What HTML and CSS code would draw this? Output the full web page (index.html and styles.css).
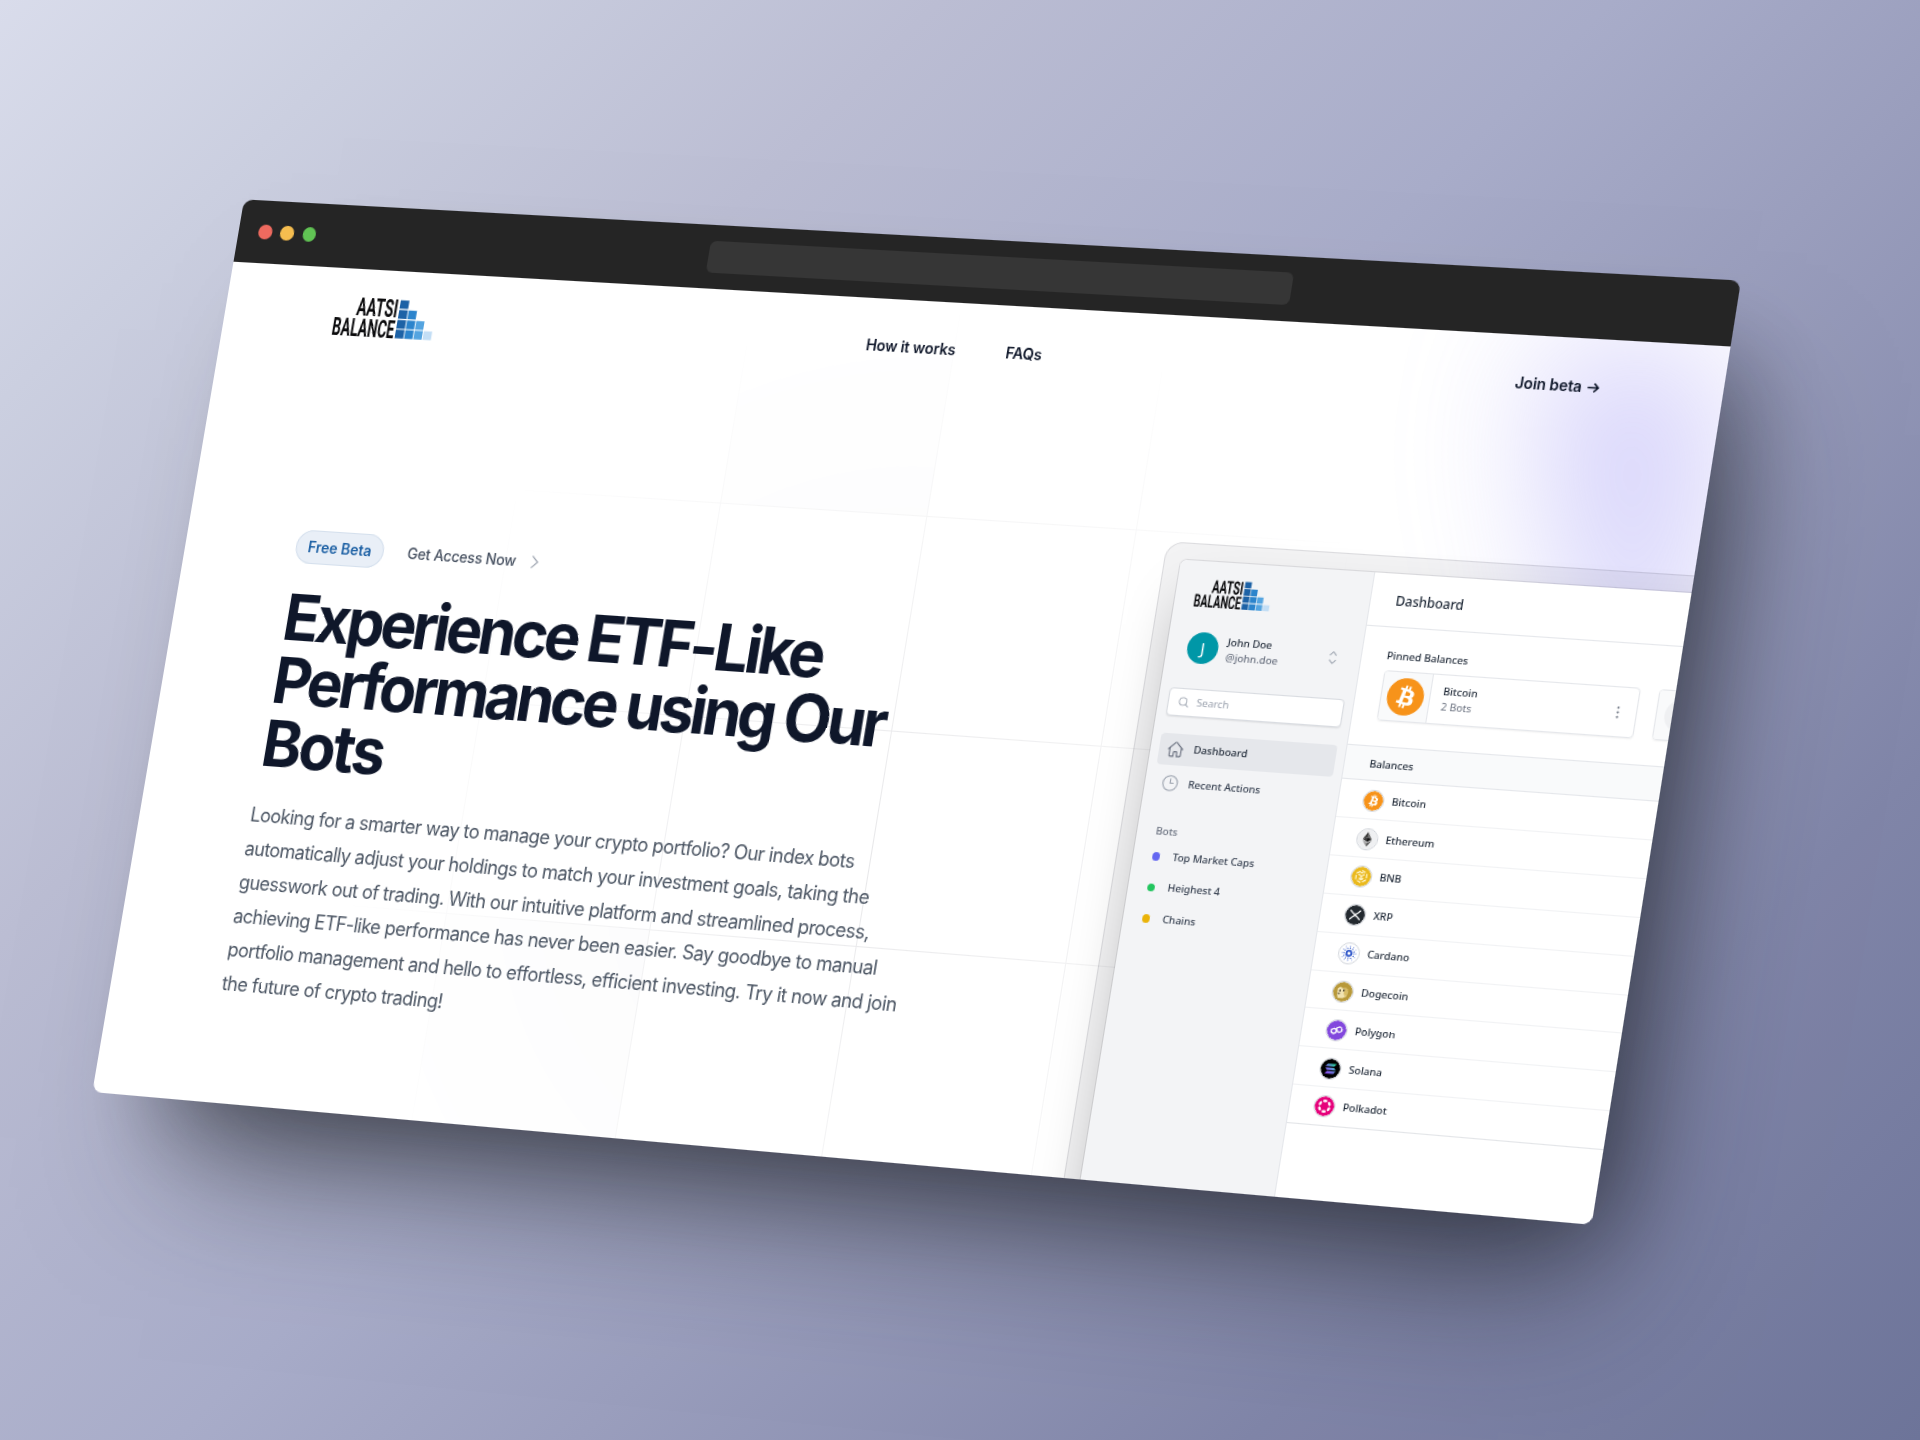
FILE: index.html
```html
<!DOCTYPE html>
<html lang="en">
<head>
<meta charset="utf-8">
<title>Aatsi Balance</title>
<link rel="stylesheet" href="styles.css">
</head>
<body>
<svg class="defs" aria-hidden="true">
  <symbol id="stairs" viewBox="0 0 102 40">
    <path fill="#1d62a6" d="M64 3.4h8.6v8.2H64zM64 12.8h8.6V21H64zM64 22.2h8.6v8.2H64zM64 31.6h8.6v8.2H64z"/>
    <path fill="#2c84cc" d="M73.5 12.8h8.3V21h-8.3zM73.5 22.2h8.3v8.2h-8.3zM73.5 31.6h8.3v8.2h-8.3z"/>
    <path fill="#54a4e0" d="M82.7 22.2H91v8.2h-8.3zM82.7 31.6H91v8.2h-8.3z"/>
    <path fill="#c3def5" d="M91.9 31.6h8.4v8.2h-8.4z"/>
  </symbol>
  <symbol id="btc" viewBox="0 0 32 32">
    <circle cx="16" cy="16" r="16" fill="#f7931a"/>
    <path fill="#fff" d="M23.189 14.02c.314-2.096-1.283-3.223-3.465-3.975l.708-2.84-1.728-.43-.69 2.765c-.454-.114-.92-.22-1.385-.326l.695-2.783L15.596 6l-.708 2.839c-.376-.086-.746-.17-1.104-.26l.002-.009-2.384-.595-.46 1.846s1.283.294 1.256.312c.7.175.826.638.805 1.006l-.806 3.235c.048.012.11.03.18.057l-.183-.045-1.13 4.532c-.086.212-.303.531-.793.41.018.025-1.256-.313-1.256-.313l-.858 1.978 2.25.561c.418.105.828.215 1.231.318l-.715 2.872 1.727.43.708-2.84c.472.127.93.245 1.378.357l-.706 2.828 1.728.43.715-2.866c2.948.558 5.164.333 6.097-2.333.752-2.146-.037-3.385-1.588-4.192 1.13-.26 1.98-1.003 2.207-2.538zm-3.95 5.538c-.533 2.147-4.148.986-5.32.695l.95-3.805c1.172.293 4.929.872 4.37 3.11zm.535-5.569c-.487 1.953-3.495.96-4.47.717l.86-3.45c.975.243 4.118.696 3.61 2.733z"/>
  </symbol>
  <symbol id="eth" viewBox="0 0 32 32">
    <circle cx="16" cy="16" r="16" fill="#eff0f2"/>
    <path fill="#6b6b6b" d="M16 4v8.9l7.5 3.3z"/><path fill="#3c3c3b" d="M16 4L8.500 16.200 16 12.900z"/>
    <path fill="#141414" d="M16 12.900v7.700l7.500-4.400z"/><path fill="#393939" d="M8.500 16.200l7.500 4.400v-7.700z"/>
    <path fill="#4a4a4a" d="M16 22v6l7.500-10.400z"/><path fill="#8c8c8c" d="M16 28v-6l-7.500-4.400z"/>
  </symbol>
  <symbol id="bnb" viewBox="0 0 32 32">
    <circle cx="16" cy="16" r="16" fill="#eab91d"/>
    <g fill="none" stroke="#fff8d8" stroke-width="2"><path d="M16 6l8.600 5v10L16 26l-8.600-5V11z" stroke-dasharray="7 3"/><path d="M11 12.500l5 3 5-3M16 15.500V22M12 18.500l4 2.500 4-2.500M13.500 10.500L16 9l2.500 1.500"/></g>
  </symbol>
  <symbol id="xrp" viewBox="0 0 32 32">
    <circle cx="16" cy="16" r="16" fill="#23292f"/>
    <path fill="none" stroke="#fff" stroke-width="2.200" d="M7.500 8.500l4.800 4.700a5.300 5.300 0 0 0 7.400 0l4.800-4.700M7.500 23.500l4.800-4.700a5.300 5.300 0 0 1 7.400 0l4.800 4.700"/>
  </symbol>
  <symbol id="ada" viewBox="0 0 32 32">
    <circle cx="16" cy="16" r="16" fill="#fff"/>
    <g fill="none" stroke="#2a52c8" stroke-linecap="round">
      <circle cx="16" cy="16" r="4.200" stroke-width="3.400" stroke-dasharray="2.200 2.200"/>
      <circle cx="16" cy="16" r="8.600" stroke-width="2.200" stroke-dasharray="0 4.503"/>
      <circle cx="16" cy="16" r="12" stroke-width="1.600" stroke-dasharray="0 6.283"/>
    </g>
  </symbol>
  <symbol id="doge" viewBox="0 0 32 32">
    <circle cx="16" cy="16" r="16" fill="#b8993a"/>
    <path fill="#f1e3b2" d="M7 11l4-3 4 2h6l3 5-1 8-6 3H9l-2-6z"/><path fill="#d8bd68" d="M18 9l6 2v8l-3 5-3-5z"/>
    <path fill="#443a22" d="M10 13h2.500v3H10zM16 12h2.500v3H16zM8 18h3.500v2H8z"/>
  </symbol>
  <symbol id="matic" viewBox="0 0 32 32">
    <circle cx="16" cy="16" r="16" fill="#8247dd"/>
    <g fill="none" stroke="#fff" stroke-width="2.300" stroke-linejoin="round"><path d="M11.500 13l4 2.300v4l-4 2.300-4-2.300v-4z"/><path d="M20.500 10.500l4 2.300v4l-4 2.300-4.500-2.300-.500-4z"/></g>
  </symbol>
  <symbol id="sol" viewBox="0 0 32 32">
    <linearGradient id="solg" x1="0" y1="1" x2="1" y2="0"><stop offset="0" stop-color="#9945ff"/><stop offset=".5" stop-color="#6d7fe0"/><stop offset="1" stop-color="#19fb9b"/></linearGradient>
    <circle cx="16" cy="16" r="16" fill="#000"/>
    <path fill="url(#solg)" d="M10.500 8H25l-3.200 4H7.300zM7.300 14h14.500L25 18H10.500zM10.500 20H25l-3.200 4H7.300z"/>
  </symbol>
  <symbol id="dot" viewBox="0 0 32 32">
    <circle cx="16" cy="16" r="16" fill="#e6007a"/>
    <g fill="#fff"><ellipse cx="16" cy="7.500" rx="3.600" ry="2.100"/><ellipse cx="16" cy="24.500" rx="3.600" ry="2.100"/>
    <ellipse cx="16" cy="7.500" rx="3.600" ry="2.100" transform="rotate(60 16 16)"/><ellipse cx="16" cy="7.500" rx="3.600" ry="2.100" transform="rotate(120 16 16)"/><ellipse cx="16" cy="7.500" rx="3.600" ry="2.100" transform="rotate(240 16 16)"/><ellipse cx="16" cy="7.500" rx="3.600" ry="2.100" transform="rotate(300 16 16)"/></g>
  </symbol>
</svg>

<div class="window">
  <div class="titlebar">
    <div class="lights"><i class="red"></i><i class="yellow"></i><i class="green"></i></div>
    <div class="address"></div>
  </div>
  <div class="page">
    <svg class="grid" width="1440" height="1024" aria-hidden="true">
      <path class="grid-fill" d="M520 0h200v200h-200zM1320 0h200v200h-200zM320 600h200v200h-200z"/>
      <path class="grid-lines" d="M120.500 0v1024M320.500 0v1024M520.500 0v1024M720.500 0v1024M920.500 0v1024M1120.500 0v1024M1320.500 0v1024M0 199.500h1440M0 399.500h1440M0 599.500h1440"/>
    </svg>
    <div class="glow"><div class="glow-shape"></div></div>

    <header class="header">
      <svg class="brand" viewBox="0 0 102 40">
        <text x="21.5" y="20.4" textLength="41" lengthAdjust="spacingAndGlyphs">AATSI</text>
        <text x="0" y="39.8" textLength="62.500" lengthAdjust="spacingAndGlyphs">BALANCE</text>
        <use href="#stairs"/>
      </svg>
      <nav class="links"><a>How it works</a><a>FAQs</a></nav>
      <div class="join"><a>Join beta <svg class="arrow" viewBox="0 0 14 14"><path d="M1.500 7h10.500M7.800 2.800L12 7l-4.200 4.200"/></svg></a></div>
    </header>

    <main class="hero">
      <section class="copy">
        <div class="tagline">
          <span class="badge">Free Beta</span>
          <span class="access">Get Access Now <svg viewBox="0 0 10 16"><path d="M1.500 1.500L8 8l-6.500 6.500"/></svg></span>
        </div>
        <h1>Experience ETF-Like<br>Performance using Our<br><span class="last-word">Bots</span></h1>
        <p>Looking for a smarter way to manage your crypto portfolio? Our index bots<br>automatically adjust your holdings to match your investment goals, taking the<br>guesswork out of trading. With our intuitive platform and streamlined process,<br>achieving ETF-like performance has never been easier. Say goodbye to manual<br>portfolio management and hello to effortless, efficient investing. Try it now and join<br>the future of crypto trading!</p>
      </section>

      <section class="device">
        <div class="app">
          <aside class="side">
            <svg class="side-logo" viewBox="0 0 102 40">
              <text x="21.5" y="20.4" textLength="41" lengthAdjust="spacingAndGlyphs">AATSI</text>
              <text x="0" y="39.8" textLength="62.500" lengthAdjust="spacingAndGlyphs">BALANCE</text>
              <use href="#stairs"/>
            </svg>
            <div class="user">
              <span class="avatar">J</span>
              <div class="who"><b>John Doe</b><span>@john.doe</span></div>
              <svg class="updown" viewBox="0 0 12 16"><path d="M2.500 5.500L6 2l3.500 3.500M2.500 10.500L6 14l3.500-3.500"/></svg>
            </div>
            <div class="search">
              <svg viewBox="0 0 12 12"><circle cx="5.200" cy="5.200" r="4.200"/><path d="M8.300 8.300L11.300 11.300"/></svg>
              <span>Search</span>
            </div>
            <div class="menu">
              <div class="item active"><svg viewBox="0 0 24 24"><path d="M2.250 12l8.954-8.955a1.125 1.125 0 0 1 1.591 0L21.750 12M4.500 9.750v10.125c0 .621.504 1.125 1.125 1.125H9.750v-4.875c0-.621.504-1.125 1.125-1.125h2.250c.621 0 1.125.504 1.125 1.125V21h4.125c.621 0 1.125-.504 1.125-1.125V9.750"/></svg>Dashboard</div>
              <div class="item"><svg viewBox="0 0 24 24"><circle cx="12" cy="12" r="9.500"/><path d="M12 6v6h4.500"/></svg>Recent Actions</div>
            </div>
            <div class="bots">
              <h3>Bots</h3>
              <div class="bot"><i class="indigo"></i>Top Market Caps</div>
              <div class="bot"><i class="emerald"></i>Heighest 4</div>
              <div class="bot"><i class="amber"></i>Chains</div>
            </div>
          </aside>
          <div class="main">
            <div class="main-head">Dashboard</div>
            <div class="pinned">
              <h3>Pinned Balances</h3>
              <div class="cards">
                <div class="card">
                  <div class="thumb"><svg><use href="#btc"/></svg></div>
                  <div class="card-text"><b>Bitcoin</b><span>2 Bots</span></div>
                  <svg class="kebab" viewBox="0 0 14 14"><circle cx="7" cy="2.500" r="1.100"/><circle cx="7" cy="7" r="1.100"/><circle cx="7" cy="11.500" r="1.100"/></svg>
                </div>
                <div class="card">
                  <div class="thumb"><span class="blank"></span></div>
                </div>
              </div>
            </div>
            <div class="band">Balances</div>
            <div class="rows">
              <div class="row"><svg class="coin"><use href="#btc"/></svg>Bitcoin</div>
              <div class="row"><svg class="coin"><use href="#eth"/></svg>Ethereum</div>
              <div class="row"><svg class="coin"><use href="#bnb"/></svg>BNB</div>
              <div class="row"><svg class="coin"><use href="#xrp"/></svg>XRP</div>
              <div class="row"><svg class="coin"><use href="#ada"/></svg>Cardano</div>
              <div class="row"><svg class="coin"><use href="#doge"/></svg>Dogecoin</div>
              <div class="row"><svg class="coin"><use href="#matic"/></svg>Polygon</div>
              <div class="row"><svg class="coin"><use href="#sol"/></svg>Solana</div>
              <div class="row"><svg class="coin"><use href="#dot"/></svg>Polkadot</div>
            </div>
          </div>
        </div>
      </section>
    </main>
  </div>
</div>
</body>
</html>
```
FILE: styles.css
```css
* { box-sizing: border-box; }

html, body { margin: 0; }

body {
  width: 1920px;
  height: 1440px;
  overflow: hidden;
  background: linear-gradient(135deg, #d9dceb 0%, #cbcfe0 12%, #bbbdd3 28%, #a8acc9 48%, #9a9ebd 60%, #8085a8 80%, #6d7499 100%);
  font-family: Inter, "Liberation Sans", sans-serif;
}

.defs { position: absolute; width: 0; height: 0; }

.brand text, .side-logo text {
  font: 700 23.4px Roboto, "Liberation Sans", sans-serif;
  fill: #0a0a0c;
}

/* Window, tilted in perspective */
.window {
  width: 1440px;
  height: 854px;
  border-radius: 9px;
  transform-origin: 0 0;
  transform: matrix3d(0.974623, 0.045931, 0, -0.0000372722, -0.178502, 1.036314, 0, -0.000008137, 0, 0, 1, 0, 244.1, 199.4, 0, 1);
  box-shadow: 50px 90px 130px -40px rgba(28, 31, 36, .58), 42px 42px 80px -36px rgba(20, 22, 28, .45);
}

.titlebar {
  display: flex;
  align-items: center;
  height: 60px;
  padding-left: 20px;
  border-radius: 9px 9px 0 0;
  background: #252525;
}

.lights { display: flex; gap: 8.800px; width: 449px; }
.lights i { width: 13.500px; height: 13.500px; border-radius: 50%; }
.red { background: #ee6a5f; }
.yellow { background: #f5bd4f; }
.green { background: #61c454; }

.address { width: 560px; height: 30px; border-radius: 6px; background: #363636; }

.page {
  position: relative;
  height: 794px;
  overflow: hidden;
  border-radius: 0 0 9px 9px;
  background: #fff;
}

.grid {
  position: absolute;
  top: 0;
  left: 0;
  -webkit-mask-image: radial-gradient(512px 512px at center, #fff, transparent);
  mask-image: radial-gradient(512px 512px at center, #fff, transparent);
}
.grid-lines { fill: none; stroke: #e7e7e9; }
.grid-fill { fill: #fafafb; }

.glow {
  position: absolute;
  top: 0;
  left: 912px;
  right: 0;
  overflow: hidden;
  filter: blur(64px);
}
.glow-shape {
  width: 801px;
  height: 1036px;
  opacity: .38;
  background: linear-gradient(to top right, #8a9cff 20%, #8878f0 85%);
  clip-path: polygon(63.1% 29.5%, 100% 17.1%, 76.6% 3%, 48.4% 0%, 44.6% 4.7%, 54.5% 25.3%, 59.8% 49%, 55.2% 57.8%, 44.4% 57.2%, 27.8% 47.9%, 35.1% 81.5%, 0% 97.7%, 39.2% 100%, 35.2% 81.4%, 97.2% 52.8%, 63.1% 29.5%);
}

.header {
  position: relative;
  display: flex;
  align-items: center;
  height: 88px;
  padding: 24px 112px;
  color: #0f172a;
  font-size: 14px;
  font-weight: 600;
  line-height: 24px;
  letter-spacing: -.1px;
}
.brand { width: 102px; height: 40px; margin-left: -2px; letter-spacing: 0; }
.links { display: flex; justify-content: center; gap: 48px; flex: 1; }
.brand, .join { flex: none; }
.join { width: 100px; display: flex; justify-content: flex-end; white-space: nowrap; }
.join a { display: flex; align-items: center; gap: 4px; }
.arrow { width: 13px; height: 13px; fill: none; stroke: #0f172a; stroke-width: 1.600; }

.hero { position: relative; display: flex; padding-left: 111px; }

.copy { flex: none; width: 840px; padding-top: 161.500px; }
.tagline { display: flex; align-items: center; gap: 24px; height: 32px; font-size: 14px; line-height: 24px; }
.badge {
  padding: 4px 12px;
  border-radius: 16px;
  background: #e9eff7;
  box-shadow: inset 0 0 0 1px #d5e0ed;
  color: #1f62a5;
  font-weight: 600;
}
.access { display: flex; align-items: center; gap: 14px; color: #475161; font-weight: 500; letter-spacing: -.2px; }
.access svg { width: 9px; height: 14px; fill: none; stroke: #9ca3af; stroke-width: 1.400; }

h1 {
  margin: 21.500px 0 0;
  color: #0f172a;
  font-size: 60px;
  font-weight: 700;
  line-height: 60px;
  letter-spacing: -3.800px;
  white-space: nowrap;
}
.last-word { letter-spacing: -2.700px; }
.copy p {
  margin: 22.500px 0 0;
  color: #4b5563;
  font-size: 18px;
  line-height: 32px;
  letter-spacing: -.540px;
  white-space: nowrap;
}

.device {
  flex: none;
  width: 1248px;
  height: 760px;
  margin-top: 120px;
  padding: 16px;
  border-radius: 16px;
  background: rgba(17, 24, 39, .05);
  box-shadow: inset 0 0 0 1px rgba(17, 24, 39, .1);
}
.app {
  display: flex;
  height: 728px;
  border-radius: 6px;
  background: #fff;
  box-shadow: 0 0 0 1px rgba(17, 24, 39, .1), 0 25px 50px -12px rgba(0, 0, 0, .25);
  overflow: hidden;
  color: #1f2937;
  font-family: "Noto Sans", "Open Sans", sans-serif;
  font-size: 9.700px;
  font-weight: 550;
  line-height: 14px;
  letter-spacing: -.050px;
}

.side { flex: none; width: 182px; background: #f3f4f6; border-right: 1px solid #e5e7eb; }
.side-logo { display: block; width: 72.400px; height: 28.400px; margin: 13.500px 0 0 17.500px; letter-spacing: 0; }
.user { display: flex; align-items: center; height: 28.400px; margin: 23.500px 20px 0 19px; }
.avatar {
  width: 29px;
  height: 29px;
  border-radius: 50%;
  background: #0097a7;
  color: #fff;
  font-size: 15px;
  line-height: 29px;
  font-weight: 400;
  text-align: center;
}
.who { display: flex; flex-direction: column; flex: 1; margin-left: 8px; }
.who b, .card-text b { font-weight: inherit; }
.who span, .card-text span { color: #6b7280; }
.updown { width: 11px; height: 14px; fill: none; stroke: #9ca3af; stroke-width: 1.200; }
.search {
  display: flex;
  align-items: center;
  gap: 7px;
  height: 26px;
  margin: 22.800px 8.500px 0 9px;
  padding-left: 9px;
  border: 1px solid #d9dce1;
  border-radius: 4px;
  background: #fff;
  box-shadow: 0 1px 1.500px rgba(0, 0, 0, .08);
  color: #9ca3af;
  font-weight: 400;
}
.search svg { width: 10px; height: 10px; fill: none; stroke: #9ca3af; }
.menu { display: flex; flex-direction: column; gap: 2.700px; margin: 16.500px 8px 0; }
.item { display: flex; align-items: center; gap: 8.500px; height: 28.500px; padding-left: 7px; border-radius: 4px; color: #374151; }
.item svg { width: 17px; height: 17px; fill: none; stroke: #9ca3af; stroke-width: 1.500; }
.active { background: #e5e7eb; color: #1f2937; }
.active svg { stroke: #6b7280; }
.bots { margin: 23.500px 0 0 17.500px; color: #374151; }
.bots h3 { margin: 0 0 1.300px; color: #6b7280; font-size: inherit; font-weight: inherit; }
.bot { display: flex; align-items: center; gap: 12px; height: 28.500px; }
.bot i { width: 7.500px; height: 7.500px; border-radius: 50%; }
.indigo { background: #6366f1; }
.emerald { background: #22c55e; }
.amber { background: #eab308; }

.main { flex: 1; min-width: 0; }
.main-head {
  height: 48.500px;
  padding-left: 23px;
  border-bottom: 1px solid #e5e7eb;
  font-size: 12.100px;
  line-height: 50px;
}
.pinned { height: 108.500px; padding: 19px 0 0 23px; }
.pinned h3 { margin: 0; font-size: inherit; font-weight: inherit; }
.cards { display: flex; gap: 17.600px; margin-top: 6.500px; }
.card {
  display: flex;
  align-items: center;
  width: 235.500px;
  height: 46px;
  border: 1px solid #e5e7eb;
  border-radius: 4px;
  box-shadow: 0 1px 1.500px rgba(0, 0, 0, .05);
}
.thumb {
  display: flex;
  align-items: center;
  justify-content: center;
  width: 45px;
  height: 44px;
  border-right: 1px solid #e5e7eb;
  border-radius: 3px 0 0 3px;
  background: #f9fafb;
}
.thumb svg { width: 34px; height: 34px; }
.blank { width: 30px; height: 30px; border-radius: 50%; background: #eff0f2; }
.card-text { display: flex; flex-direction: column; flex: 1; margin-left: 11px; }
.card-text span { font-weight: 400; }
.kebab { width: 13px; height: 13px; margin-right: 10px; fill: #6b7280; }
.band {
  height: 32.300px;
  padding: 9px 0 0 23px;
  border: solid #e5e7eb;
  border-width: 1px 0;
  background: #f9fafb;
}
.row {
  display: flex;
  align-items: center;
  gap: 7.500px;
  height: 34.850px;
  padding: 1px 0 0 21.500px;
  border-bottom: 1px solid #f1f2f4;
}
.row:last-child { border-color: #e3e5e8; }
.coin { width: 20px; height: 20px; border: 1.500px solid #d1d5db; border-radius: 50%; }
```
